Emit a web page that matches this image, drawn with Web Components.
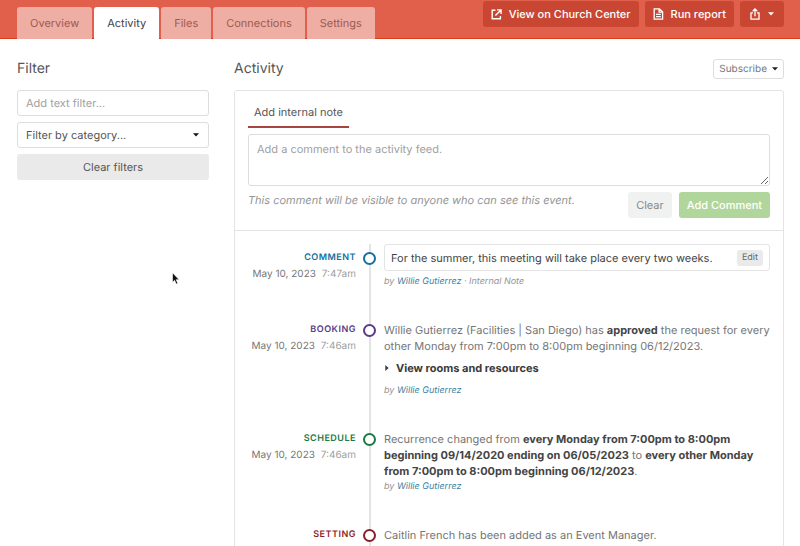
<!DOCTYPE html>
<html lang="en">
<head>
<meta charset="utf-8">
<meta name="viewport" content="width=device-width, initial-scale=1">
<title>Event activity</title>
<style>
  html {
    scrollbar-width: none;
  }
  body {
    margin: 0;
    background: #fff;
    color: #757575;
    font: 11px/16px Inter, "Open Sans", sans-serif;
    text-rendering: geometricPrecision;
  }
  strong {
    color: #444;
    font-weight: 700;
  }
</style>
</head>
<body>
<event-page>
  <top-bar slot="header">
    <nav-tab slot="tabs">Overview</nav-tab>
    <nav-tab slot="tabs" active>Activity</nav-tab>
    <nav-tab slot="tabs">Files</nav-tab>
    <nav-tab slot="tabs">Connections</nav-tab>
    <nav-tab slot="tabs">Settings</nav-tab>
    <ui-button variant="header" icon="external">View on Church Center</ui-button>
    <ui-button variant="header" icon="report">Run report</ui-button>
    <ui-button variant="header" icon="share" label="Share" caret></ui-button>
  </top-bar>
  <filter-panel slot="sidebar"></filter-panel>
  <activity-feed>
    <comment-form slot="form"></comment-form>
    <feed-entry type="Comment" color="#14719c" date="May 10, 2023" time="7:47am" author="Willie Gutierrez" source="Internal Note" note>For the summer, this meeting will take place every two weeks.</feed-entry>
    <feed-entry type="Booking" color="#5b3a86" date="May 10, 2023" time="7:46am" author="Willie Gutierrez">Willie Gutierrez (Facilities | San Diego) has <strong>approved</strong> the request for every other Monday from 7:00pm to 8:00pm beginning 06/12/2023.<detail-toggle slot="details">View rooms and resources</detail-toggle></feed-entry>
    <feed-entry type="Schedule" color="#1c7a45" date="May 10, 2023" time="7:46am" author="Willie Gutierrez">Recurrence changed from <strong>every Monday from 7:00pm to 8:00pm beginning 09/14/2020 ending on 06/05/2023</strong> to <strong>every other Monday from 7:00pm to 8:00pm beginning 06/12/2023</strong>.</feed-entry>
    <feed-entry type="Setting" color="#8c1f2c">Caitlin French has been added as an Event Manager.</feed-entry>
  </activity-feed>
</event-page>
<mouse-pointer></mouse-pointer>

<script>
const ICONS = {
  external: `<svg width="11" height="11" viewBox="0 0 11 11" fill="none" stroke="currentColor" stroke-width="1.4"><path d="M4.4 1.2H1.2v8.6h8.2V7M6 .9h4.1V5M9.8 1.2 4.4 6.6"/></svg>`,
  report: `<svg width="11" height="12" viewBox="0 0 11 12" fill="none" stroke="currentColor" stroke-width="1.3"><path d="M1.2.8h5.2l3.2 3.1v7.3H1.2zM6.1 1v3.2h3.3M3 6.4h4.8M3 8.7h4.8"/></svg>`,
  share: `<svg width="10" height="12" viewBox="0 0 10 12" fill="none" stroke="currentColor" stroke-width="1.3"><path d="M3 4.8H1v6.3h8V4.8H7M5 8.2V1.2M2.7 3.3 5 1l2.3 2.3"/></svg>`,
  caret: `<svg width="6" height="4" viewBox="0 0 6 4" fill="currentColor"><path d="M0 .2h6L3 3.6z"/></svg>`,
};

class EventPage extends HTMLElement {
  constructor() {
    super();
    this.attachShadow({ mode: "open" }).innerHTML = `
    <style>
    :host {
      display: block;
    }
    main {
      display: grid;
      grid-template-columns: minmax(120px, 24%) 1fr;
      gap: 25px;
      padding: 20px 16px 0 17px;
    }
    @media (min-width: 600px) {
      main {
        grid-template-columns: 192px 1fr;
      }
    }
    </style>
    <slot name="header"></slot>
    <main>
      <slot name="sidebar"></slot>
      <slot></slot>
    </main>`;
  }
}

class TopBar extends HTMLElement {
  constructor() {
    super();
    this.attachShadow({ mode: "open" }).innerHTML = `
    <style>
    :host {
      display: flex;
      justify-content: space-between;
      box-sizing: border-box;
      height: 39px;
      padding: 0 16px 0 17px;
      background: #e0604c;
      box-shadow: inset 0 -1px #dc3d16;
    }
    nav {
      display: flex;
      align-items: flex-end;
      gap: 2px;
    }
    .actions {
      display: flex;
      align-items: flex-start;
      gap: 6px;
      padding-top: 1px;
    }
    </style>
    <nav><slot name="tabs"></slot></nav>
    <div class="actions"><slot></slot></div>`;
  }
}

class NavTab extends HTMLElement {
  constructor() {
    super();
    this.attachShadow({ mode: "open" }).innerHTML = `
    <style>
    :host {
      display: block;
    }
    a {
      display: block;
      padding: 8px 13px;
      border-radius: 3px 3px 0 0;
      background: #efaea4;
      color: #9b5b51;
      text-decoration: none;
    }
    :host([active]) a {
      background: #fff;
      color: #444;
    }
    </style>
    <a href="#"><slot></slot></a>`;
  }
}

class UiButton extends HTMLElement {
  constructor() {
    super();
    const icon = ICONS[this.getAttribute("icon")] || "";
    const label = this.getAttribute("label");
    this.attachShadow({ mode: "open" }).innerHTML = `
    <style>
    :host {
      display: block;
    }
    button {
      display: flex;
      align-items: center;
      justify-content: center;
      gap: 7px;
      width: 100%;
      height: 26px;
      padding: 0 8px;
      border: 0;
      border-radius: 3px;
      background: #eaeaea;
      color: #555;
      font: inherit;
      text-rendering: inherit;
      white-space: nowrap;
    }
    :host([variant="header"]) button {
      background: #c94732;
      color: #fff;
      font-weight: 500;
    }
    :host([variant="header"][caret]) button {
      gap: 8px;
      padding: 0 10px;
    }
    :host([variant="primary"]) button {
      background: #b1d69c;
      color: #fff;
      font-weight: 500;
    }
    :host([variant="muted"]) button {
      background: #f0f1f1;
      color: #888;
    }
    :host([variant="outline"]) button {
      height: 20px;
      gap: 5px;
      padding: 0 5px;
      border: 1px solid #ddd;
      background: #fff;
      color: #777;
      font-size: 10px;
    }
    :host([variant="small"]) button {
      height: 16px;
      padding: 0 5px;
      color: #666;
      font-size: 9px;
    }
    :host([variant="outline"]) svg {
      color: #222;
    }
    </style>
    <button type="button"${label ? ` aria-label="${label}"` : ""}>${icon}<slot></slot>${this.hasAttribute("caret") ? ICONS.caret : ""}</button>`;
  }
}

class FilterPanel extends HTMLElement {
  constructor() {
    super();
    this.attachShadow({ mode: "open" }).innerHTML = `
    <style>
    :host {
      display: block;
    }
    h2 {
      margin: 0 0 11px;
      color: #555;
      font-size: 14px;
      font-weight: 400;
      line-height: 20px;
    }
    form {
      display: grid;
      gap: 6px;
    }
    input, select {
      box-sizing: border-box;
      width: 100%;
      height: 26px;
      padding: 0 8px;
      border: 1px solid #ddd;
      border-radius: 3px;
      background: #fff;
      color: #555;
      font: inherit;
      text-rendering: inherit;
      appearance: none;
    }
    input::placeholder {
      color: #a0a0a0;
    }
    .select {
      display: grid;
      align-items: center;
    }
    .select > * {
      grid-area: 1 / 1;
    }
    .select svg {
      justify-self: end;
      margin-right: 10px;
      color: #111;
      pointer-events: none;
    }
    </style>
    <h2>Filter</h2>
    <form>
      <input type="text" placeholder="Add text filter..." aria-label="Text filter">
      <div class="select">
        <select aria-label="Category"><option>Filter by category...</option></select>
        ${ICONS.caret}
      </div>
      <ui-button>Clear filters</ui-button>
    </form>`;
  }
}

class ActivityFeed extends HTMLElement {
  constructor() {
    super();
    this.attachShadow({ mode: "open" }).innerHTML = `
    <style>
    :host {
      display: block;
      min-width: 0;
    }
    header {
      display: flex;
      align-items: center;
      justify-content: space-between;
      margin-bottom: 11px;
    }
    h2 {
      margin: 0;
      color: #555;
      font-size: 14px;
      font-weight: 400;
      line-height: 20px;
    }
    .card {
      border: 1px solid #e4e4e4;
      border-radius: 3px;
    }
    .entries {
      padding: 13px 13px 16px 0;
      border-top: 1px solid #e4e4e4;
    }
    </style>
    <header>
      <h2>Activity</h2>
      <ui-button variant="outline" caret>Subscribe</ui-button>
    </header>
    <div class="card">
      <slot name="form"></slot>
      <div class="entries"><slot></slot></div>
    </div>`;
  }
}

class CommentForm extends HTMLElement {
  constructor() {
    super();
    this.attachShadow({ mode: "open" }).innerHTML = `
    <style>
    :host {
      display: block;
      padding: 13px 13px 12px;
    }
    label {
      display: block;
      width: fit-content;
      padding: 0 6px 6px;
      border-bottom: 2px solid #a8443f;
      color: #555;
    }
    textarea {
      display: block;
      box-sizing: border-box;
      width: 100%;
      height: 52px;
      margin: 6px 0;
      padding: 6px 8px;
      border: 1px solid #ddd;
      border-radius: 3px;
      color: #555;
      font: inherit;
      text-rendering: inherit;
    }
    textarea::placeholder {
      color: #a0a0a0;
    }
    footer {
      display: flex;
      gap: 7px;
    }
    p {
      flex: 1;
      margin: 0;
      color: #959595;
      font-style: italic;
    }
    </style>
    <label for="note">Add internal note</label>
    <textarea id="note" placeholder="Add a comment to the activity feed."></textarea>
    <footer>
      <p>This comment will be visible to anyone who can see this event.</p>
      <ui-button variant="muted">Clear</ui-button>
      <ui-button variant="primary">Add Comment</ui-button>
    </footer>`;
  }
}

class FeedEntry extends HTMLElement {
  constructor() {
    super();
    this.attachShadow({ mode: "open" });
    this.render();
  }

  render() {
    const get = (name) => this.getAttribute(name) || "";
    const note = this.hasAttribute("note");
    const date = get("date") ? `<div class="date">${get("date")} <time>${get("time")}</time></div>` : "";
    const source = get("source") ? ` · ${get("source")}` : "";
    const byline = get("author") ? `<div class="by">by <a href="#">${get("author")}</a>${source}</div>` : "";

    this.shadowRoot.innerHTML = `
    <style>
    :host {
      display: grid;
      grid-template-columns: 121px 27px 1fr;
      --accent: ${get("color")};
    }
    .meta, .rail {
      padding-top: ${note ? 6 : 0}px;
    }
    .meta {
      text-align: right;
    }
    .type {
      color: var(--accent);
      font-size: 9px;
      font-weight: 600;
      letter-spacing: 0.5px;
      text-transform: uppercase;
    }
    .date {
      color: #777;
      font-size: 10px;
    }
    time {
      margin-left: 3px;
      color: #a0a0a0;
    }
    .rail {
      background: linear-gradient(#e4e4e4, #e4e4e4) center / 2px 100% no-repeat;
    }
    .ring {
      box-sizing: border-box;
      width: 13px;
      height: 13px;
      margin: 2px auto;
      border: 2px solid var(--accent);
      border-radius: 50%;
      background: #fff;
    }
    .body {
      min-width: 0;
      padding: 0 0 32px 1px;
    }
    .note {
      display: flex;
      align-items: center;
      justify-content: space-between;
      box-sizing: border-box;
      min-height: 27px;
      margin-bottom: 3px;
      padding: 0 6px;
      border: 1px solid #e4e4e4;
      border-radius: 3px;
      color: #444;
    }
    .by {
      color: #959595;
      font-size: 9px;
      font-style: italic;
    }
    a {
      color: #3d7f9f;
      text-decoration: none;
    }
    </style>
    <div class="meta">
      <div class="type">${get("type")}</div>
      ${date}
    </div>
    <div class="rail"><div class="ring"></div></div>
    <div class="body">
      ${note
        ? `<div class="note"><span><slot></slot></span><ui-button variant="small">Edit</ui-button></div>`
        : `<div><slot></slot></div>`}
      <slot name="details"></slot>
      ${byline}
    </div>`;
  }
}

class DetailToggle extends HTMLElement {
  constructor() {
    super();
    this.attachShadow({ mode: "open" }).innerHTML = `
    <style>
    :host {
      display: block;
      padding: 6px 0 7px;
    }
    button {
      display: flex;
      align-items: center;
      gap: 7px;
      padding: 0 0 0 1px;
      border: 0;
      background: none;
      color: #3a3a3a;
      font: inherit;
      font-weight: 700;
      text-rendering: inherit;
    }
    </style>
    <button type="button" aria-expanded="false">
      <svg width="4" height="6" viewBox="0 0 4 6" fill="currentColor"><path d="M.3 0v6L3.6 3z"/></svg>
      <slot></slot>
    </button>`;
  }
}

class MousePointer extends HTMLElement {
  constructor() {
    super();
    this.attachShadow({ mode: "open" }).innerHTML = `
    <style>
    :host {
      position: fixed;
      left: 172px;
      top: 272px;
      pointer-events: none;
    }
    svg {
      display: block;
    }
    </style>
    <svg width="8" height="13" viewBox="0 0 8 13"><path d="M.5.7v9.6l2.1-2 1.6 3.8 1.6-.7-1.6-3.7h2.9z" fill="#111" stroke="#fff" stroke-width=".6"/></svg>`;
  }
}

customElements.define("event-page", EventPage);
customElements.define("top-bar", TopBar);
customElements.define("nav-tab", NavTab);
customElements.define("ui-button", UiButton);
customElements.define("filter-panel", FilterPanel);
customElements.define("activity-feed", ActivityFeed);
customElements.define("comment-form", CommentForm);
customElements.define("feed-entry", FeedEntry);
customElements.define("detail-toggle", DetailToggle);
customElements.define("mouse-pointer", MousePointer);
</script>
</body>
</html>
